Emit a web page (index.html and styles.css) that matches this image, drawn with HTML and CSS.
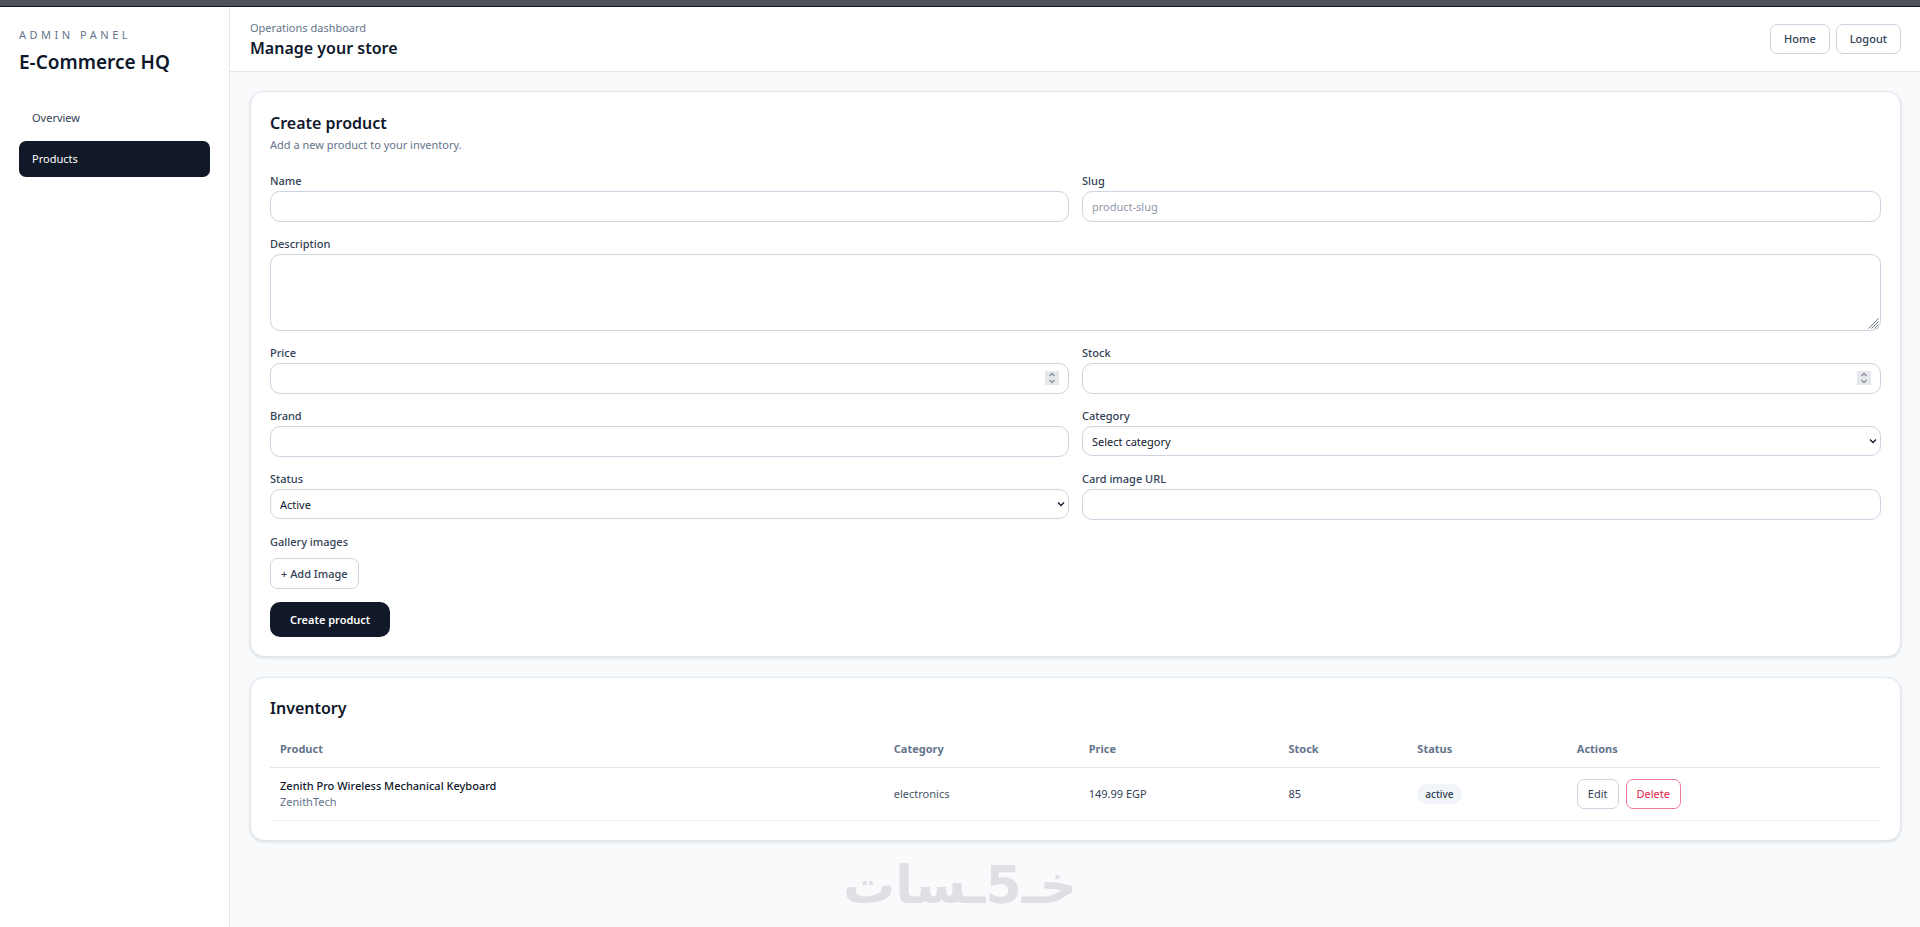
FILE: index.html
```html
<!DOCTYPE html>
<html lang="en">
<head>
    <title>E-Commerce HQ</title>
    <meta charset="utf-8">
    <meta name="viewport" content="width=device-width, initial-scale=1">
    <link rel="stylesheet" href="styles.css">
</head>

<body>
  <div class="top-strip"></div>
  <div class="layout">
    <aside class="sidebar">
      <p class="eyebrow">Admin Panel</p>
      <h1 class="brand">E-Commerce HQ</h1>
      <nav class="nav">
        <a class="nav-link" href="#">Overview</a>
        <a class="nav-link active" href="#">Products</a>
      </nav>
    </aside>

    <div class="content">
      <header class="header">
        <div>
          <p class="muted">Operations dashboard</p>
          <h2 class="title title-tight">Manage your store</h2>
        </div>
        <div class="header-actions">
          <a class="btn btn-wide" href="#">Home</a>
          <button class="btn btn-wide" type="button">Logout</button>
        </div>
      </header>

      <main class="main">
        <section class="card">
          <h2 class="title">Create product</h2>
          <p class="muted">Add a new product to your inventory.</p>
          <form class="form">
            <div class="field">
              <label for="name">Name</label>
              <input class="control" id="name" type="text">
            </div>
            <div class="field">
              <label for="slug">Slug</label>
              <input class="control" id="slug" type="text" placeholder="product-slug">
            </div>
            <div class="field full">
              <label for="description">Description</label>
              <textarea class="control area" id="description"></textarea>
            </div>
            <div class="field">
              <label for="price">Price</label>
              <input class="control" id="price" type="number">
            </div>
            <div class="field">
              <label for="stock">Stock</label>
              <input class="control" id="stock" type="number">
            </div>
            <div class="field">
              <label for="brand">Brand</label>
              <input class="control" id="brand" type="text">
            </div>
            <div class="field">
              <label for="category">Category</label>
              <select class="control select" id="category">
                <option>Select category</option>
                <option>electronics</option>
              </select>
            </div>
            <div class="field">
              <label for="status">Status</label>
              <select class="control select" id="status">
                <option>Active</option>
                <option>Inactive</option>
              </select>
            </div>
            <div class="field">
              <label for="image">Card image URL</label>
              <input class="control" id="image" type="text">
            </div>
            <div class="gallery full">
              <p class="gallery-label">Gallery images</p>
              <button class="btn" type="button">+ Add Image</button>
            </div>
            <div class="full">
              <button class="btn-primary" type="button">Create product</button>
            </div>
          </form>
        </section>

        <section class="card">
          <h2 class="title title-tight">Inventory</h2>
          <table class="table">
            <thead>
              <tr>
                <th class="col-product">Product</th>
                <th class="col-category">Category</th>
                <th class="col-price">Price</th>
                <th class="col-stock">Stock</th>
                <th class="col-status">Status</th>
                <th>Actions</th>
              </tr>
            </thead>
            <tbody>
              <tr>
                <td>
                  <p class="product-name">Zenith Pro Wireless Mechanical Keyboard</p>
                  <p class="product-brand">ZenithTech</p>
                </td>
                <td class="soft">electronics</td>
                <td>149.99 EGP</td>
                <td>85</td>
                <td><span class="badge">active</span></td>
                <td>
                  <div class="row-actions">
                    <button class="btn" type="button">Edit</button>
                    <button class="btn btn-danger" type="button">Delete</button>
                  </div>
                </td>
              </tr>
            </tbody>
          </table>
        </section>
      </main>
    </div>
  </div>
  <div class="watermark" lang="ar" dir="rtl">خـ5ـسات</div>
</body>
</html>
```
FILE: styles.css
```css
* {
  box-sizing: border-box;
}

body {
  margin: 0;
  min-height: 100vh;
  display: flex;
  flex-direction: column;
  background-color: #f8fafc;
  color: #0f172a;
  font-family: "Noto Sans", sans-serif;
  font-size: 11px;
  line-height: 18px;
}

h1, h2, p {
  margin: 0;
}

a {
  text-decoration: none;
}

.top-strip {
  height: 7px;
  background-color: #525358;
  border-bottom: 1px solid #0f172a;
}

.layout {
  flex: 1;
  display: flex;
}

/* sidebar */
.sidebar {
  width: 230px;
  padding: 19px;
  background-color: white;
  border-right: 1px solid #e2e8f0;
}

.eyebrow {
  color: #64748b;
  letter-spacing: 0.32em;
  text-transform: uppercase;
}

.brand {
  margin-top: 5px;
  font-size: 19px;
  font-weight: 600;
  line-height: 26px;
}

.nav {
  display: flex;
  flex-direction: column;
  gap: 5px;
  margin-top: 25px;
}

.nav-link {
  padding: 9px 13px;
  border-radius: 7px;
  color: #334155;
}

.nav-link.active {
  background-color: #111827;
  color: white;
}

/* header */
.content {
  flex: 1;
  min-width: 0;
}

.header {
  display: flex;
  align-items: center;
  justify-content: space-between;
  padding: 12px 19px 12px 20px;
  background-color: white;
  border-bottom: 1px solid #e2e8f0;
}

.header-actions {
  display: flex;
  gap: 6px;
}

.title {
  font-size: 16px;
  font-weight: 600;
  line-height: 25px;
}

.title-tight {
  line-height: 22px;
}

.muted {
  color: #64748b;
}

/* buttons */
.btn {
  padding: 5px 10px;
  background-color: white;
  border: 1px solid #cbd5e1;
  border-radius: 7px;
  color: #334155;
  font: inherit;
  line-height: 19px;
}

.btn-wide {
  padding: 5px 13px;
  font-weight: 500;
  line-height: 18px;
}

.btn-danger {
  border-color: #f17a95;
  color: #e11d48;
}

.btn-primary {
  padding: 8px 20px;
  background-color: #111827;
  border: 0;
  border-radius: 10px;
  color: white;
  font: inherit;
  font-weight: 600;
  line-height: 19px;
}

/* cards */
.main {
  display: flex;
  flex-direction: column;
  gap: 20px;
  padding: 19px 19px 19px 20px;
}

.card {
  padding: 19px;
  background-color: white;
  border: 1px solid #e2e8f0;
  border-radius: 14px;
  box-shadow: 0 1px 3px rgba(15, 23, 42, 0.14);
}

/* product form */
.form {
  display: grid;
  grid-template-columns: 1fr 1fr;
  gap: 13px;
  margin-top: 18px;
}

.full {
  grid-column: 1 / -1;
}

.field {
  display: flex;
  flex-direction: column;
  gap: 2px;
}

.field label,
.gallery-label {
  color: #334155;
  font-weight: 500;
  line-height: 17px;
}

.control {
  width: 100%;
  height: 31px;
  padding: 6px 9px;
  background-color: white;
  border: 1px solid #cbd5e1;
  border-radius: 10px;
  color: #0f172a;
  font: inherit;
}

.control::placeholder {
  color: #8f99a9;
}

.control::-webkit-inner-spin-button {
  width: 14px;
  height: 14px;
  margin: 0;
  appearance: none;
  background: #e5e7eb url("data:image/svg+xml,%3Csvg xmlns='http://www.w3.org/2000/svg' width='14' height='14' fill='none' stroke='%238b93a1' stroke-width='1.5'%3E%3Cpath d='M4.5 5 7 2.5 9.5 5M4.5 9 7 11.5 9.5 9'/%3E%3C/svg%3E") no-repeat;
  opacity: 1;
}

.area {
  display: block;
  height: 77px;
  resize: vertical;
}

.area::-webkit-resizer {
  background: url("data:image/svg+xml,%3Csvg xmlns='http://www.w3.org/2000/svg' width='11' height='11' fill='none' stroke='%23707784'%3E%3Cpath d='M.5 10.5l10-10M3.5 10.5l7-7M6.5 10.5l4-4M9.5 10.5l1-1'/%3E%3C/svg%3E") no-repeat right 1px bottom 1px;
}

.select {
  height: 30px;
  appearance: none;
  background: white url("data:image/svg+xml,%3Csvg xmlns='http://www.w3.org/2000/svg' width='8' height='6' fill='none' stroke='%230f172a' stroke-width='1.3'%3E%3Cpath d='M1 1.5 4 4.5 7 1.5'/%3E%3C/svg%3E") no-repeat right 3px center;
}

.gallery {
  display: flex;
  flex-direction: column;
  align-items: flex-start;
  gap: 8px;
}

.btn-primary,
.gallery .btn {
  display: block;
}

.gallery .btn {
  font-weight: 500;
}

/* inventory table */
.table {
  width: 100%;
  margin-top: 12px;
  border-collapse: collapse;
  text-align: left;
}

.table th {
  padding: 9px 10px;
  border-bottom: 1px solid #e2e8f0;
  color: #64748b;
  font-weight: 700;
}

.table td {
  padding: 10px;
  border-bottom: 1px solid #f1f5f9;
  color: #334155;
}

.table td.soft {
  color: #475569;
}

.col-product {
  width: 38.1%;
}

.col-category {
  width: 12.1%;
}

.col-price {
  width: 12.4%;
}

.col-stock {
  width: 8%;
}

.col-status {
  width: 9.9%;
}

.product-name {
  color: #0f172a;
  font-weight: 500;
  line-height: 16px;
}

.product-brand {
  color: #64748b;
  line-height: 16px;
}

.badge {
  display: inline-block;
  padding: 1px 8px;
  background-color: #f1f5f9;
  border-radius: 10px;
  color: #334155;
  font-size: 10px;
  font-weight: 500;
}

.row-actions {
  display: flex;
  gap: 7px;
}

.row-actions .btn {
  line-height: 18px;
}

/* site mark over the bottom of the page */
.watermark {
  position: absolute;
  right: 0;
  bottom: 0;
  left: 0;
  color: #dfe0e3;
  font-family: "DejaVu Sans", sans-serif;
  font-size: 52px;
  font-weight: 700;
  line-height: 84px;
  text-align: center;
  pointer-events: none;
}
```
